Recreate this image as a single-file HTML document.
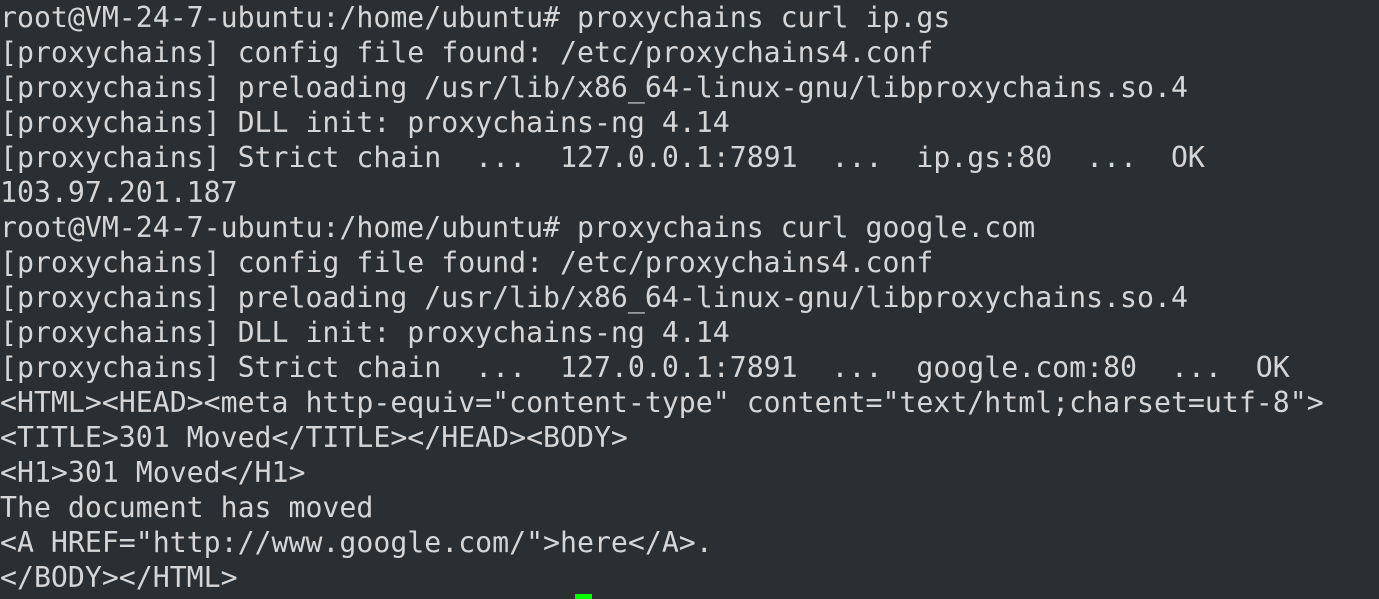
<!DOCTYPE html>
<html><head><style>
html,body{margin:0;padding:0;background:#292f33;width:1379px;height:599px;overflow:hidden}
pre{margin:0;padding:0;font-family:"DejaVu Sans Mono","Liberation Mono",monospace;font-size:28.2px;line-height:35px;color:#d6d6d6;white-space:pre;position:absolute;left:0;top:0}
.cur{position:absolute;left:575px;top:594px;width:17px;height:5px;background:#00ff00}
</style></head><body>
<pre>root@VM-24-7-ubuntu:/home/ubuntu# proxychains curl ip.gs
[proxychains] config file found: /etc/proxychains4.conf
[proxychains] preloading /usr/lib/x86_64-linux-gnu/libproxychains.so.4
[proxychains] DLL init: proxychains-ng 4.14
[proxychains] Strict chain  ...  127.0.0.1:7891  ...  ip.gs:80  ...  OK
103.97.201.187
root@VM-24-7-ubuntu:/home/ubuntu# proxychains curl google.com
[proxychains] config file found: /etc/proxychains4.conf
[proxychains] preloading /usr/lib/x86_64-linux-gnu/libproxychains.so.4
[proxychains] DLL init: proxychains-ng 4.14
[proxychains] Strict chain  ...  127.0.0.1:7891  ...  google.com:80  ...  OK
&lt;HTML&gt;&lt;HEAD&gt;&lt;meta http-equiv="content-type" content="text/html;charset=utf-8"&gt;
&lt;TITLE&gt;301 Moved&lt;/TITLE&gt;&lt;/HEAD&gt;&lt;BODY&gt;
&lt;H1&gt;301 Moved&lt;/H1&gt;
The document has moved
&lt;A HREF="http://www.google.com/"&gt;here&lt;/A&gt;.
&lt;/BODY&gt;&lt;/HTML&gt;</pre>
<div class="cur"></div>
</body></html>
